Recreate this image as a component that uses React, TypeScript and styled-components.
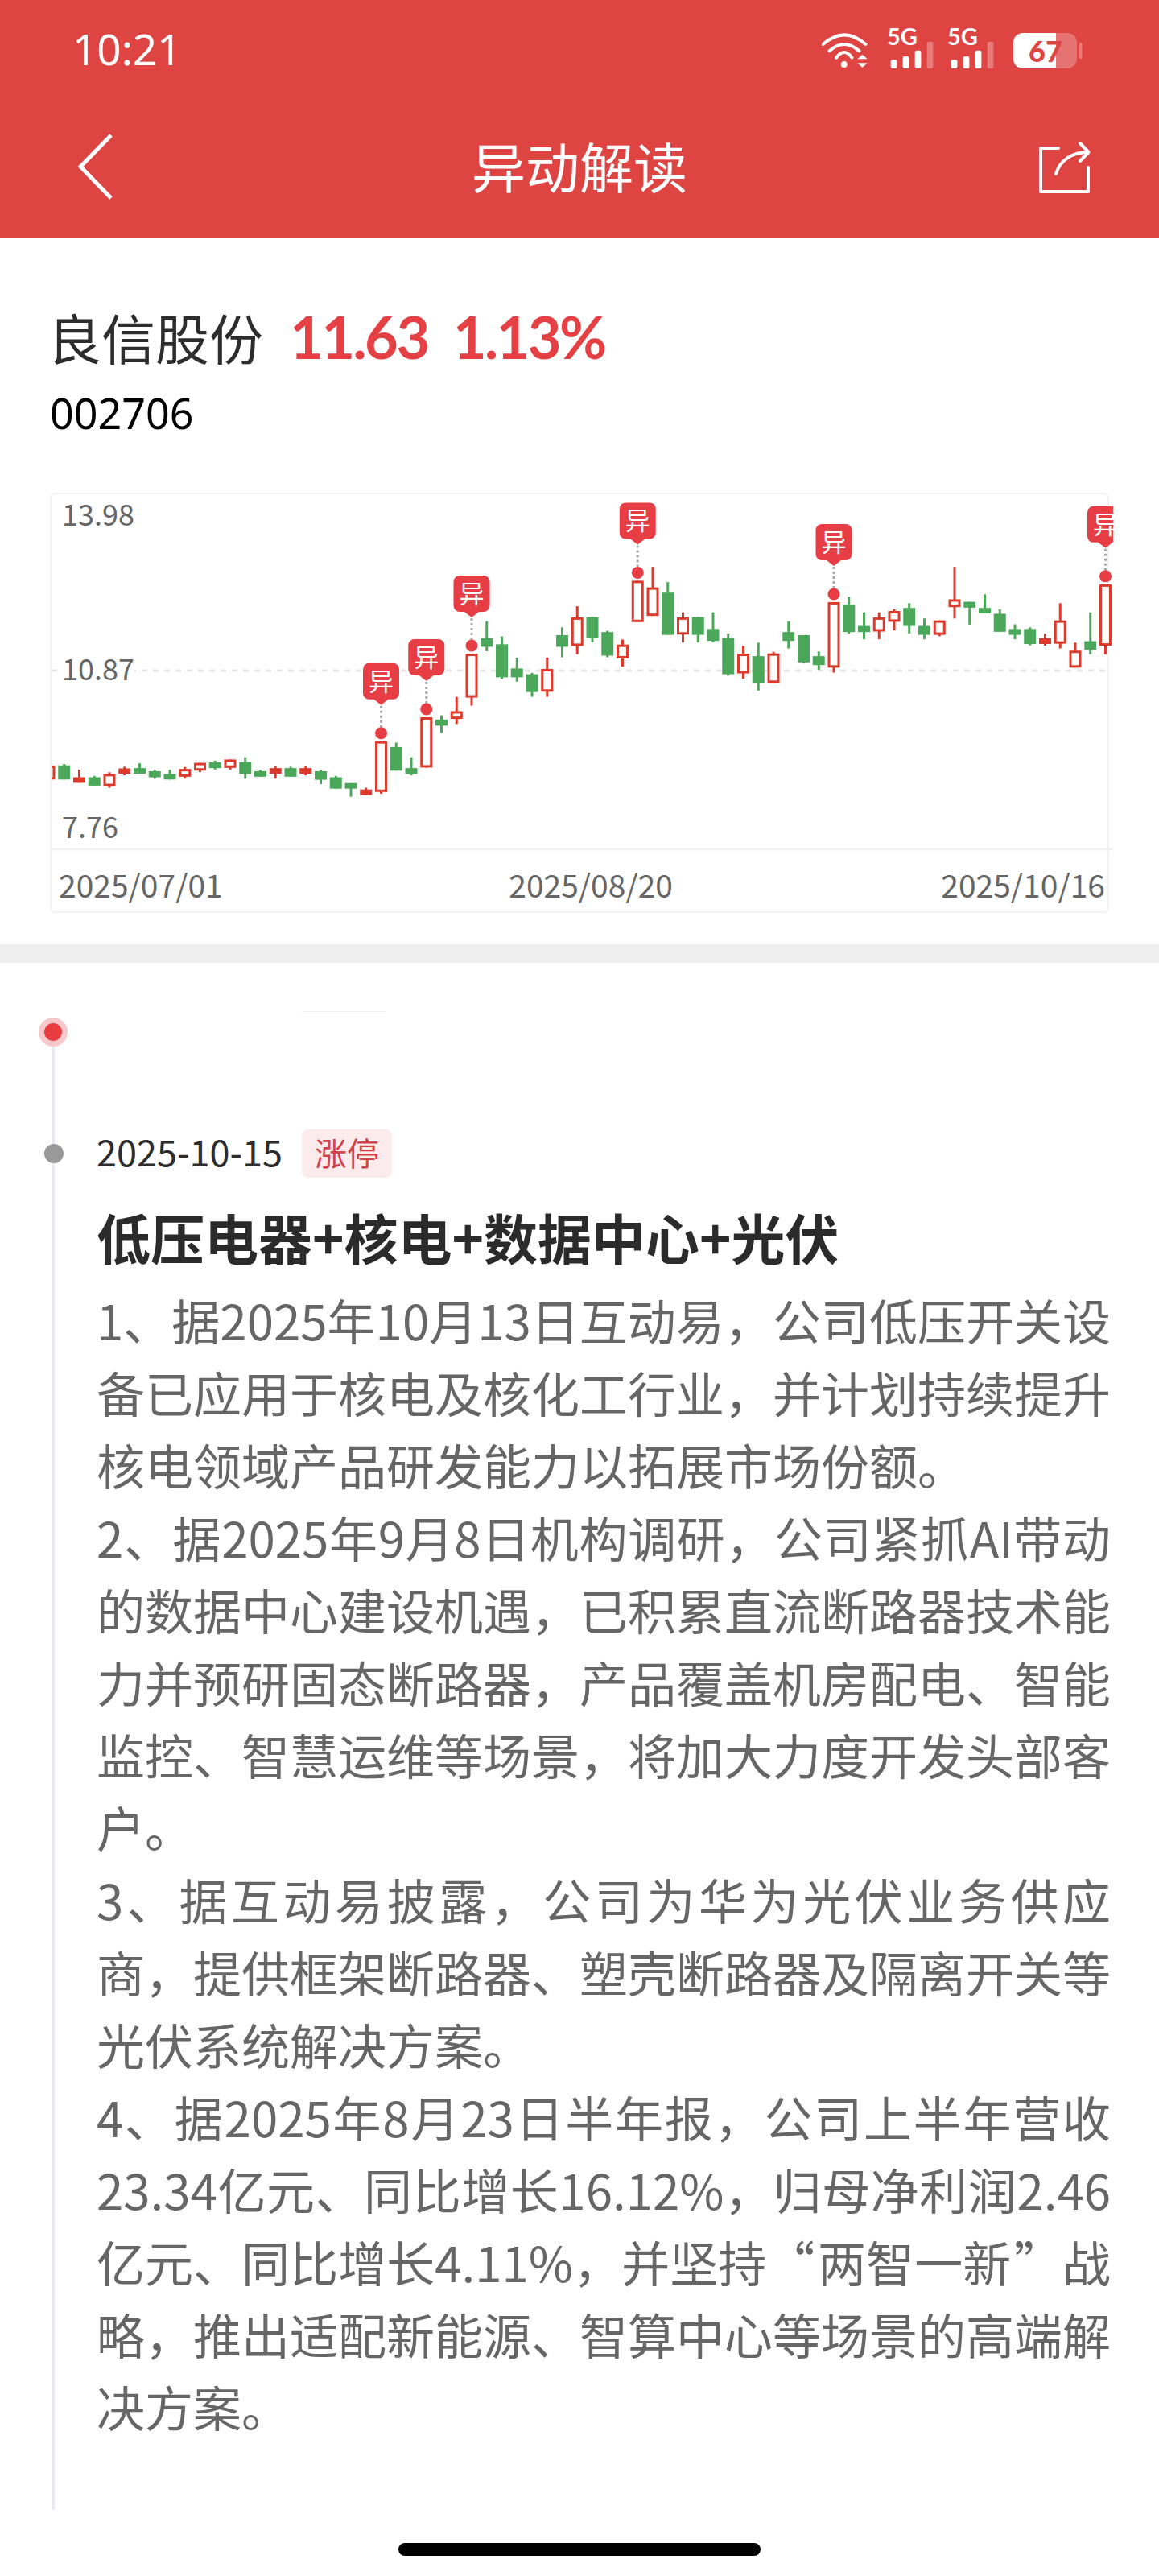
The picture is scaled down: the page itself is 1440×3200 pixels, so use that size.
import React from 'react';
import styled, { createGlobalStyle } from 'styled-components';

const CJK = '"Noto Sans CJK SC", "Noto Sans", sans-serif';

const GlobalStyle = createGlobalStyle`
  * { box-sizing: border-box; }
  html, body { margin: 0; background: #fff; }
  body { font-family: ${CJK}; }
`;

const Page = styled.div`
  width: 1440px;
  min-height: 3200px;
  background: #fff;
  overflow: hidden;
`;

const Header = styled.header`
  height: 296px;
  background: #dd4442;
  color: #fff;
`;

const StatusBar = styled.div`
  height: 118px;
  padding: 28px 96px 0 90px;
  display: flex;
  justify-content: space-between;
  align-items: flex-start;
`;

const Clock = styled.span`
  font-family: "Noto Sans", sans-serif;
  font-size: 53px;
  line-height: 60px;
  margin-top: 3px;
`;

const StatusIcons = styled.div`
  display: flex;
  align-items: flex-start;
  gap: 13px;
`;

const WifiIcon = styled.svg`
  margin: 12px 5px 0 0;
`;

const BatteryIcon = styled.svg`
  margin: 13px -1px 0 8px;
`;

const NavBar = styled.nav`
  height: 178px;
  padding: 0 84px;
  display: grid;
  grid-template-columns: 1fr auto 1fr;
  align-items: center;
`;

const BackIcon = styled.svg`
  margin-left: 12px;
  justify-self: start;
`;

const ShareIcon = styled.svg`
  justify-self: end;
  margin-top: 2px;
`;

const NavTitle = styled.h1`
  margin: -4px 0 0;
  font-size: 67px;
  font-weight: 400;
  line-height: 80px;
`;

const StockSection = styled.section`
  padding: 82px 62px 39px;
`;

const StockLine = styled.div`
  display: flex;
  align-items: center;
  height: 80px;
`;

const StockName = styled.span`
  margin-left: -3px;
  font-size: 67px;
  color: #2d2d2d;
  line-height: 80px;
`;

const StockQuote = styled.span`
  margin-left: 33px;
  font-family: Lato, sans-serif;
  font-size: 72px;
  font-weight: 700;
  color: #e54044;
  line-height: 80px;
  letter-spacing: -2.5px;
  word-spacing: 16px;
`;

const StockCode = styled.div`
  margin-top: 20px;
  font-family: "Noto Sans", sans-serif;
  font-size: 52px;
  line-height: 70px;
  color: #000;
`;

const ChartFrame = styled.div`
  position: relative;
  margin-top: 64px;
  width: 1316px;
  height: 522px;
  border: 2px solid #f3f3f3;
  border-radius: 6px;
`;

const ChartSvg = styled.svg`
  position: absolute;
  left: 0;
  top: 0;
  font-family: ${CJK};
`;

const Separator = styled.div`
  height: 23px;
  background: #efefef;
`;

const Timeline = styled.section`
  position: relative;
  padding: 60px 60px 84px 120px;

  &::before {
    content: "";
    position: absolute;
    left: 64px;
    top: 104px;
    bottom: 0;
    width: 4px;
    background: #e9e9f0;
  }
`;

const TopRule = styled.div`
  margin-left: 255px;
  width: 105px;
  height: 1px;
  background: #eef3f2;
`;

const LiveDot = styled.span`
  position: absolute;
  left: 48px;
  top: 68px;
  width: 36px;
  height: 36px;
  border-radius: 50%;
  background: #e83c41;
  border: 7px solid #f8c9cb;
`;

const Entry = styled.article`
  position: relative;
  margin-top: 146px;
`;

const EntryDot = styled.span`
  position: absolute;
  left: -65px;
  top: 18px;
  width: 24px;
  height: 24px;
  border-radius: 50%;
  background: #999;
`;

const EntryHead = styled.div`
  display: flex;
  align-items: center;
  height: 60px;
`;

const EntryDate = styled.span`
  margin-top: -8px;
  font-size: 45px;
  color: #2d2d2d;
`;

const Tag = styled.span`
  margin-left: 24px;
  width: 112px;
  height: 60px;
  border-radius: 8px;
  background: #fbebec;
  color: #d0434a;
  font-size: 40px;
  line-height: 56px;
  text-align: center;
`;

const EntryTitle = styled.h2`
  margin: 28px 0 0;
  font-size: 67px;
  font-weight: 700;
  line-height: 90px;
  color: #2b2b2b;
`;

const EntryBody = styled.div`
  margin-top: 13px;
  color: #666;
  font-size: 60px;
  line-height: 90px;
  text-align: justify;

  p { margin: 0; }
`;

const HomeBar = styled.div`
  width: 450px;
  height: 16px;
  margin: 41px auto 0;
  border-radius: 8px;
  background: #000;
`;

// [high, bodyTop, bodyBottom, low, kind] measured against the reference crop, see toY
type Kind = 'g' | 'r' | 'R';
type Candle = [number, number, number, number, Kind];

const candles: Candle[] = [
  [1018, 1018, 1068, 1068, 'r'], [1012, 1017, 1068, 1068, 'g'], [1032, 1060, 1080, 1080, 'R'], [1055, 1060, 1090, 1090, 'g'],
  [1042, 1048, 1092, 1098, 'r'], [1022, 1028, 1047, 1053, 'R'], [1010, 1027, 1047, 1047, 'g'], [1033, 1038, 1060, 1065, 'g'],
  [1033, 1048, 1068, 1068, 'g'], [1023, 1030, 1058, 1065, 'r'], [1008, 1008, 1036, 1041, 'r'], [1000, 1006, 1027, 1032, 'g'],
  [996, 996, 1026, 1032, 'r'], [988, 1005, 1048, 1065, 'g'], [1033, 1038, 1058, 1058, 'g'], [1021, 1027, 1047, 1065, 'R'],
  [1022, 1027, 1058, 1058, 'g'], [1021, 1027, 1047, 1053, 'R'], [1033, 1038, 1069, 1085, 'g'], [1055, 1060, 1101, 1101, 'g'],
  [1081, 1081, 1101, 1130, 'g'], [1098, 1104, 1124, 1124, 'R'], [930, 930, 1113, 1119, 'r'], [935, 951, 1036, 1036, 'g'],
  [988, 1027, 1048, 1053, 'g'], [844, 844, 1025, 1025, 'r'], [837, 852, 874, 900, 'g'], [770, 822, 850, 868, 'r'],
  [615, 615, 773, 802, 'r'], [498, 559, 590, 606, 'g'], [553, 581, 700, 706, 'g'], [629, 668, 700, 716, 'g'],
  [684, 689, 753, 770, 'g'], [629, 670, 752, 770, 'r'], [520, 548, 590, 628, 'g'], [444, 484, 587, 617, 'r'],
  [483, 483, 558, 574, 'g'], [532, 537, 622, 628, 'g'], [564, 582, 632, 661, 'r'], [352, 352, 501, 501, 'r'],
  [302, 376, 479, 479, 'r'], [357, 395, 547, 547, 'g'], [466, 484, 546, 574, 'r'], [483, 483, 547, 574, 'g'],
  [466, 526, 569, 574, 'g'], [542, 558, 689, 694, 'g'], [587, 615, 686, 705, 'r'], [575, 624, 720, 748, 'g'],
  [608, 614, 720, 720, 'r'], [498, 537, 569, 596, 'g'], [548, 548, 646, 650, 'g'], [607, 624, 656, 673, 'g'],
  [429, 429, 665, 683, 'r'], [410, 438, 537, 542, 'g'], [466, 515, 537, 563, 'g'], [466, 484, 535, 563, 'r'],
  [455, 461, 500, 531, 'r'], [433, 450, 515, 542, 'g'], [488, 515, 547, 563, 'g'], [495, 495, 547, 552, 'r'],
  [302, 419, 447, 488, 'r'], [428, 428, 449, 510, 'g'], [401, 450, 470, 470, 'g'], [455, 471, 536, 536, 'g'],
  [509, 526, 547, 563, 'g'], [520, 526, 580, 585, 'g'], [542, 559, 580, 586, 'R'], [433, 495, 579, 596, 'r'],
  [575, 604, 665, 665, 'r'], [466, 570, 601, 617, 'g'], [365, 365, 586, 617, 'r'],
];

const markerIndexes = [22, 25, 28, 39, 52, 70];

const paragraphs = [
  '1、据2025年10月13日互动易，公司低压开关设备已应用于核电及核化工行业，并计划持续提升核电领域产品研发能力以拓展市场份额。',
  '2、据2025年9月8日机构调研，公司紧抓AI带动的数据中心建设机遇，已积累直流断路器技术能力并预研固态断路器，产品覆盖机房配电、智能监控、智慧运维等场景，将加大力度开发头部客户。',
  '3、据互动易披露，公司为华为光伏业务供应商，提供框架断路器、塑壳断路器及隔离开关等光伏系统解决方案。',
  '4、据2025年8月23日半年报，公司上半年营收23.34亿元、同比增长16.12%，归母净利润2.46亿元、同比增长4.11%，并坚持“\u200a两智一新\u200a”战略，推出适配新能源、智算中心等场景的高端解决方案。',
];

const RED = '#db3a2c';
const GREEN = '#4ba85a';
const PIN = '#e63e44';

const toX = (i: number) => -3 + 18.75 * i;
const toY = (v: number) => v / 2.9 - 14;

function CandleMark({ candle, index }: { candle: Candle; index: number }) {
  const [hi, top, bottom, lo, kind] = candle;
  const x = toX(index);
  const color = kind === 'g' ? GREEN : RED;
  const hollow = kind === 'r';
  return (
    <g>
      <line x1={x} x2={x} y1={toY(hi)} y2={toY(lo)} stroke={color} strokeWidth={3} />
      {hollow ? (
        <rect x={x - 6} y={toY(top) + 1.5} width={12} height={Math.max(toY(bottom) - toY(top) - 3, 1)} fill="#fff" stroke={color} strokeWidth={3} />
      ) : (
        <rect x={x - 7.5} y={toY(top)} width={15} height={toY(bottom) - toY(top)} fill={color} />
      )}
    </g>
  );
}

function Marker({ index }: { index: number }) {
  const x = toX(index);
  const bodyTop = toY(candles[index][1]);
  const pinTop = bodyTop - 97;
  return (
    <g>
      <line x1={x} x2={x} y1={pinTop + 53} y2={bodyTop - 15} stroke="#aaa" strokeWidth={3} strokeDasharray="3 3" />
      <circle cx={x} cy={bodyTop - 10} r={7.5} fill={PIN} />
      <path
        d={`M${x - 15} ${pinTop} h30 a7.5 7.5 0 0 1 7.5 7.5 v30 a7.5 7.5 0 0 1 -7.5 7.5 h-6 l-9 7 l-9 -7 h-6 a7.5 7.5 0 0 1 -7.5 -7.5 v-30 a7.5 7.5 0 0 1 7.5 -7.5z`}
        fill={PIN}
      />
      <text x={x} y={pinTop + 34} textAnchor="middle" fontSize={31} fill="#fff">异</text>
    </g>
  );
}

function SignalIcon() {
  return (
    <svg width={62} height={60} viewBox="0 -8 62 60" fill="#fff">
      <text x={1} y={20} fontFamily="Lato, sans-serif" fontWeight={700} fontSize={29}>5G</text>
      <rect x={5.7} y={38.3} width={7.7} height={10.7} rx={2} />
      <rect x={20.7} y={34} width={7.7} height={15} rx={2} />
      <rect x={35.7} y={26.7} width={7.7} height={22.3} rx={2} />
      <rect x={50.7} y={16} width={7.7} height={33} rx={2} opacity={0.3} />
    </svg>
  );
}

export default function App() {
  return (
    <Page>
      <GlobalStyle />
      <Header>
        <StatusBar>
          <Clock>10:21</Clock>
          <StatusIcons>
            <WifiIcon width={62} height={48} viewBox="0 0 62 48" fill="none">
              <g stroke="#fff" strokeWidth={4} strokeLinecap="round">
                <path d="M1.5 15Q28-8.4 54.5 15" />
                <path d="M9.5 23.3Q28 6.7 46.5 23.3" />
                <path d="M18 31.7Q28 18.3 37.5 31.7" />
              </g>
              <circle cx={27.7} cy={40} r={4} fill="#fff" />
              <path d="M44.3 33.3L50.5 27.7L56.7 33.3zM44.3 38.3H56.7L50.5 44z" fill="#fff" />
            </WifiIcon>
            <SignalIcon />
            <SignalIcon />
            <BatteryIcon width={86} height={44} viewBox="0 0 86 44">
              <defs>
                <clipPath id="batteryFill">
                  <rect width={53} height={44} />
                </clipPath>
              </defs>
              <rect width={79} height={44} rx={12} fill="#fff" opacity={0.25} />
              <rect width={79} height={44} rx={12} fill="#fff" clipPath="url(#batteryFill)" />
              <text x={19} y={36} fontFamily="Lato, sans-serif" fontWeight={900} fontSize={36} fill="#dd4442">67</text>
              <rect x={82} y={12} width={3.5} height={20} rx={1.5} fill="#fff" opacity={0.3} />
            </BatteryIcon>
          </StatusIcons>
        </StatusBar>
        <NavBar>
          <BackIcon width={50} height={84} viewBox="0 0 50 84" fill="none">
            <path d="M42 3L4 42L42 81" stroke="#fff" strokeWidth={5} />
          </BackIcon>
          <NavTitle>异动解读</NavTitle>
          <ShareIcon width={66} height={68} viewBox="0 0 66 68" fill="none">
            <g stroke="#fff" strokeWidth={4} strokeLinecap="round" strokeLinejoin="round">
              <path d="M25 10H3V64H62V34" />
              <path d="M22 42C27 25 42 15 62 15" />
              <path d="M52 4L62.5 15L52 26" />
            </g>
          </ShareIcon>
        </NavBar>
      </Header>

      <StockSection>
        <StockLine>
          <StockName>良信股份</StockName>
          <StockQuote>11.63 1.13%</StockQuote>
        </StockLine>
        <StockCode>002706</StockCode>
        <ChartFrame>
          <ChartSvg width={1319} height={518} viewBox="0 0 1319 518">
            <line x1={0} x2={1312} y1={219} y2={219} stroke="#e8e8e8" strokeWidth={3} strokeDasharray="7 7" />
            <line x1={0} x2={1319} y1={441} y2={441} stroke="#f1f1f1" strokeWidth={3} />
            {candles.map((c, i) => (
              <CandleMark key={i} candle={c} index={i} />
            ))}
            {markerIndexes.map(i => (
              <Marker key={i} index={i} />
            ))}
            <g fontSize={36} fill="#666">
              <text x={13} y={39}>13.98</text>
              <rect x={9} y={202} width={94} height={34} fill="#fff" />
              <text x={13} y={231}>10.87</text>
              <text x={13} y={427}>7.76</text>
            </g>
            <g fontSize={39} fill="#666">
              <text x={9} y={501}>2025/07/01</text>
              <text x={772} y={501} textAnchor="end">2025/08/20</text>
              <text x={1309} y={501} textAnchor="end">2025/10/16</text>
            </g>
          </ChartSvg>
        </ChartFrame>
      </StockSection>

      <Separator />

      <Timeline>
        <TopRule />
        <LiveDot />
        <Entry>
          <EntryDot />
          <EntryHead>
            <EntryDate>2025-10-15</EntryDate>
            <Tag>涨停</Tag>
          </EntryHead>
          <EntryTitle>低压电器+核电+数据中心+光伏</EntryTitle>
          <EntryBody>
            {paragraphs.map(text => (
              <p key={text}>{text}</p>
            ))}
          </EntryBody>
        </Entry>
      </Timeline>

      <HomeBar />
    </Page>
  );
}
